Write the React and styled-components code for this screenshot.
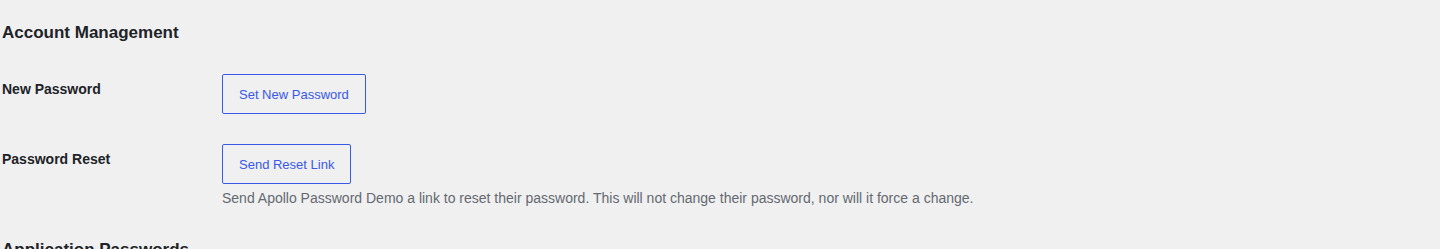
import React from 'react';
import styled, { createGlobalStyle } from 'styled-components';

const GlobalStyle = createGlobalStyle`
  html, body {
    margin: 0;
    background: #f0f0f1;
  }
  body {
    font-family: "Liberation Sans", Arial, sans-serif;
    font-size: 13px;
    color: #1d2327;
  }
`;

const Wrap = styled.div`
  padding: 0 2px;
`;

const Heading = styled.h2`
  font-size: 17px;
  font-weight: 600;
  line-height: 1.3;
  margin: ${({ $top }) => $top}px 0 15px;
  color: #1d2327;
`;

const FormTable = styled.div`
  display: flex;
  flex-direction: column;
`;

const Row = styled.div`
  display: flex;
  align-items: flex-start;
`;

const Label = styled.div`
  width: 200px;
  flex: none;
  padding: 21px 10px 19px 0;
  font-size: 14px;
  font-weight: 600;
  line-height: 1.3;
  color: #1d2327;
`;

const Field = styled.div`
  padding: 15px 10px;
  line-height: 1.3;
`;

const Button = styled.button`
  display: inline-flex;
  align-items: center;
  height: 40px;
  padding: 0 16px;
  border: 1px solid #3858e9;
  border-radius: 2px;
  background: transparent;
  color: #3858e9;
  font-family: inherit;
  font-size: 13px;
  cursor: pointer;
`;

const Description = styled.p`
  margin: 5px 0 0;
  font-size: 14px;
  line-height: 1.4;
  color: #646970;
`;

const App = () => {
  return (
    <Wrap>
      <GlobalStyle />
      <Heading $top={22}>Account Management</Heading>
      <FormTable>
        <Row>
          <Label>New Password</Label>
          <Field>
            <Button type="button">Set New Password</Button>
          </Field>
        </Row>
        <Row>
          <Label>Password Reset</Label>
          <Field>
            <Button type="button">Send Reset Link</Button>
            <Description>
              Send Apollo Password Demo a link to reset their password. This will not change their password, nor will it force a change.
            </Description>
          </Field>
        </Row>
      </FormTable>
      <Heading $top={15}>Application Passwords</Heading>
    </Wrap>
  );
};

export default App;
